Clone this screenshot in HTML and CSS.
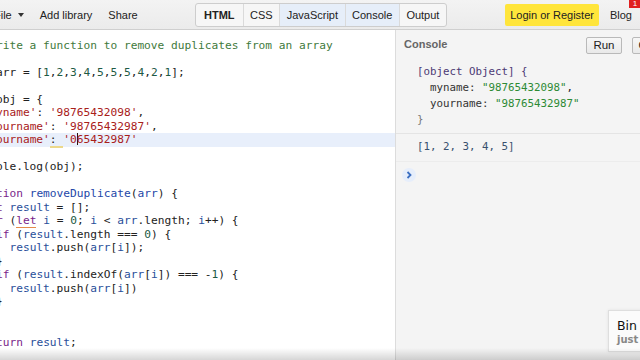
FILE: index.html
```html
<!DOCTYPE html>
<html lang="en">
<head>
<meta charset="utf-8">
<title>JS Bin</title>
<link rel="stylesheet" href="styles.css">
</head>
<body>
<div class="app">
  <header class="topbar">
    <nav class="menu">
      <span class="menu-item">File <svg class="caret" width="6" height="4" viewBox="0 0 6 4"><path d="M0 0h6L3 4z" fill="#333"/></svg></span>
      <span class="menu-item">Add library</span>
      <span class="menu-item">Share</span>
    </nav>
    <div class="tabs">
      <span class="tab tab-bold">HTML</span>
      <span class="tab">CSS</span>
      <span class="tab tab-on">JavaScript</span>
      <span class="tab tab-on">Console</span>
      <span class="tab">Output</span>
    </div>
    <div class="spacer"></div>
    <span class="login">Login or Register</span>
    <span class="blog">Blog<span class="badge">1</span></span>
  </header>
  <main class="panels">
    <section class="editor">
      <div class="code">
        <div class="ln"><span class="cm">// write a function to remove duplicates from an array</span></div>
        <div class="ln"> </div>
        <div class="ln"><span class="kw">var</span> arr = [<span class="nm">1</span>,<span class="nm">2</span>,<span class="nm">3</span>,<span class="nm">4</span>,<span class="nm">5</span>,<span class="nm">5</span>,<span class="nm">5</span>,<span class="nm">4</span>,<span class="nm">2</span>,<span class="nm">1</span>];</div>
        <div class="ln"> </div>
        <div class="ln"><span class="kw">var</span> obj = {</div>
        <div class="ln">  <span class="st">'myname'</span>: <span class="st">'98765432098'</span>,</div>
        <div class="ln">  <span class="st">'yourname'</span>: <span class="st">'98765432987'</span>,</div>
        <div class="ln ln-active">  <span class="st">'yourname'</span><span class="lint-soft">: </span><span class="st">'0<span class="cursor"></span>65432987'</span></div>
        <div class="ln">};</div>
        <div class="ln">console.log(obj);</div>
        <div class="ln"> </div>
        <div class="ln"><span class="kw">function</span> <span class="df">removeDuplicate</span>(<span class="df">arr</span>) {</div>
        <div class="ln">  <span class="kw">let</span> <span class="v2">result</span> = [];</div>
        <div class="ln">  <span class="kw">for</span> (<span class="kw lint">let</span> <span class="v2">i</span> = <span class="nm">0</span>; <span class="v2">i</span> &lt; <span class="v2">arr</span>.length; <span class="v2">i</span>++) {</div>
        <div class="ln">    <span class="kw">if</span> (<span class="v2">result</span>.length === <span class="nm">0</span>) {</div>
        <div class="ln">      <span class="v2">result</span>.push(<span class="v2">arr</span>[<span class="v2">i</span>]);</div>
        <div class="ln">    }</div>
        <div class="ln">    <span class="kw">if</span> (<span class="v2">result</span>.indexOf(<span class="v2">arr</span>[<span class="v2">i</span>]) === -<span class="nm">1</span>) {</div>
        <div class="ln">      <span class="v2">result</span>.push(<span class="v2">arr</span>[<span class="v2">i</span>])</div>
        <div class="ln">    }</div>
        <div class="ln">  }</div>
        <div class="ln"> </div>
        <div class="ln">  <span class="kw">return</span> <span class="v2">result</span>;</div>
      </div>
    </section>
    <section class="console">
      <div class="console-head">
        <span class="console-label">Console</span>
        <div class="console-btns">
          <span class="btn">Run</span>
          <span class="btn">Clear</span>
        </div>
      </div>
      <div class="out out-obj">
        <div class="oline"><span class="o-obj">[object Object] {</span></div>
        <div class="oline">  <span class="o-key">myname:</span> <span class="o-str">"98765432098"</span>,</div>
        <div class="oline">  <span class="o-key">yourname:</span> <span class="o-str">"98765432987"</span></div>
        <div class="oline"><span class="o-brace">}</span></div>
      </div>
      <div class="out out-arr">
        <div class="oline"><span class="o-arr">[1, 2, 3, 4, 5]</span></div>
      </div>
      <div class="prompt">
        <svg width="12" height="12" viewBox="0 0 12 12"><path d="M4.5 3l3 3-3 3" fill="none" stroke="#3b6fc2" stroke-width="1.8"/></svg>
      </div>
      <div class="toast">
        <div class="toast-title">Bin is saved</div>
        <div class="toast-sub">just now</div>
      </div>
    </section>
  </main>
</div>
</body>
</html>
```
FILE: styles.css
```css
* { box-sizing: border-box; }
html, body { margin: 0; padding: 0; }
body {
  width: 640px;
  height: 360px;
  overflow: hidden;
  font-family: "Liberation Sans", Arial, sans-serif;
  color: #222;
}
.app {
  position: relative;
  width: 640px;
  height: 360px;
  display: flex;
  flex-direction: column;
  overflow: hidden;
}
.app::after {
  content: "";
  position: absolute;
  left: 0;
  right: 0;
  bottom: 0;
  height: 12px;
  background: linear-gradient(to bottom, rgba(0,0,0,0), rgba(0,0,0,0.16));
  pointer-events: none;
}

/* top bar */
.topbar {
  flex: 0 0 30px;
  display: flex;
  align-items: center;
  background: linear-gradient(#f3f3f3, #ebebeb);
  border-bottom: 1px solid #cfcfcf;
  font-size: 11px;
  color: #222;
}
.menu {
  flex: 0 0 201px;
  margin-left: -6px;
  display: flex;
  align-items: center;
  gap: 16px;
}
.menu-item { white-space: nowrap; display: flex; align-items: center; }
.caret { margin-left: 6px; }
.tabs {
  display: flex;
  height: 24px;
  border: 1px solid #cdcdcd;
  border-radius: 3px;
  overflow: hidden;
  background: #f6f6f6;
}
.tab {
  display: flex;
  align-items: center;
  padding: 0 6.5px;
  border-left: 1px solid #dadada;
  white-space: nowrap;
}
.tab:first-child { border-left: 0; padding: 0 8px; }
.tab-bold { font-weight: bold; }
.tab-on { background: #e6eef9; }
.spacer { flex: 1; }
.login {
  display: flex;
  align-items: center;
  height: 22px;
  padding: 0 5px;
  background: #ffe53b;
  border-radius: 2px;
  white-space: nowrap;
}
.blog {
  position: relative;
  margin: 0 8px 0 11px;
}
.badge {
  position: absolute;
  top: -10px;
  right: -9px;
  width: 12px;
  height: 9px;
  background: #e02020;
  color: #fff;
  font-size: 8px;
  line-height: 9px;
  text-align: center;
}

/* panels */
.panels {
  flex: 1;
  display: flex;
  min-height: 0;
}
.editor {
  flex: 0 0 395px;
  background: #fff;
  overflow: hidden;
}
.code {
  margin-left: -31px;
  padding-top: 8.75px;
  font-family: "DejaVu Sans Mono", monospace;
  font-size: 11.2px;
  color: #222;
}
.ln {
  height: 13.5px;
  line-height: 13.5px;
  white-space: pre;
  width: 430px;
}
.ln-active { background: #e8effb; }
.cm { color: #3f7a3c; }
.kw { color: #7a1f8a; }
.st { color: #a8201a; }
.nm { color: #1d5a44; }
.df { color: #2447a8; }
.v2 { color: #2a4f9a; }
.lint { border-bottom: 1px solid #e58a4a; }
.lint-soft { border-bottom: 2px solid #ecd88a; }
.cursor {
  display: inline-block;
  width: 0;
  height: 12px;
  border-left: 1px solid #331111;
  vertical-align: -2px;
  margin-right: -1px;
}

/* console */
.console {
  position: relative;
  flex: 1;
  background: #f4f4f4;
  border-left: 1px solid #dcdcdc;
  overflow: hidden;
}
.console-head {
  display: flex;
  align-items: center;
  height: 24px;
  margin-top: 3px;
  padding-left: 8px;
}
.console-label {
  font-size: 11px;
  font-weight: bold;
  color: #666;
  margin-top: -2px;
}
.console-btns {
  margin-left: auto;
  margin-right: -33px;
  display: flex;
  gap: 10px;
}
.btn {
  display: flex;
  align-items: center;
  height: 17px;
  padding: 0 6px;
  font-size: 11.5px;
  color: #222;
  background: linear-gradient(#f7f7f7, #e9e9e9);
  border: 1px solid #b9b9b9;
  border-radius: 2px;
}
.out {
  font-family: "DejaVu Sans Mono", monospace;
  font-size: 10.8px;
  padding-left: 21px;
}
.out-obj {
  padding-top: 7px;
  padding-bottom: 5px;
  border-bottom: 1px solid #e4e4e4;
}
.out-arr {
  padding-top: 5px;
  padding-bottom: 6px;
  border-bottom: 1px solid #ececec;
}
.oline {
  height: 16px;
  line-height: 16px;
  white-space: pre;
}
.o-obj { color: #4d3a74; }
.o-key { color: #333; }
.o-str { color: #2d8a34; }
.o-brace { color: #777; }
.o-arr { color: #38506e; }
.prompt {
  margin: 6px 0 0 6px;
  width: 14px;
  height: 14px;
  border-radius: 50%;
  background: #e6eefb;
  display: flex;
  align-items: center;
  justify-content: center;
}
.toast {
  position: absolute;
  left: 212px;
  bottom: 8px;
  width: 90px;
  height: 42px;
  padding: 7px 8px;
  background: #fbfbfb;
  border: 1px solid #dedede;
  box-shadow: 0 0 3px rgba(0,0,0,0.08);
  white-space: nowrap;
}
.toast-title {
  font-family: "DejaVu Sans", sans-serif;
  font-size: 12.5px;
  color: #111;
  line-height: 15px;
}
.toast-sub {
  font-family: "DejaVu Sans", sans-serif;
  font-size: 10px;
  font-weight: bold;
  color: #888;
  line-height: 13px;
}
```
